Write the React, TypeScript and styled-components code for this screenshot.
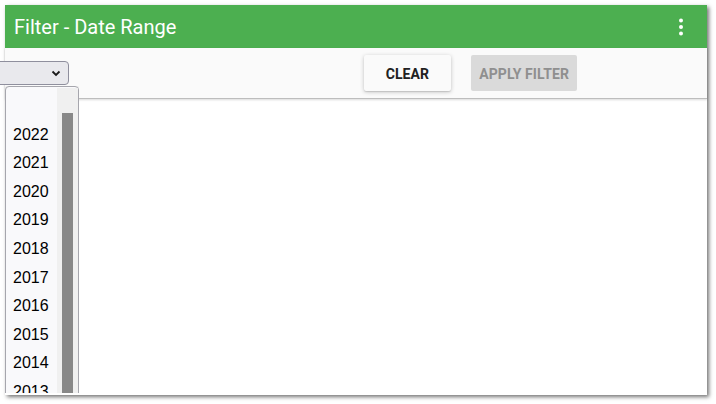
import React from "react";
import styled, { createGlobalStyle } from "styled-components";

const Global = createGlobalStyle`
  html, body { margin: 0; padding: 0; background: #ffffff; }
  body { font-family: Roboto, "Liberation Sans", Arial, sans-serif; }
  * { box-sizing: border-box; }
`;

const Page = styled.div`
  width: 716px;
  height: 404px;
  padding: 5px 9px 9px 5px;
  overflow: hidden;
`;

const Panel = styled.section`
  position: relative;
  width: 702px;
  height: 390px;
  background: #ffffff;
  box-shadow: 2px 2px 4px rgba(0, 0, 0, 0.55);
  display: flex;
  flex-direction: column;
`;

const Header = styled.header`
  height: 43px;
  background: #4caf50;
  display: flex;
  align-items: center;
  justify-content: space-between;
  padding: 0 22px 0 9px;
  flex-shrink: 0;
`;

const Title = styled.h1`
  margin: 0;
  font-family: Roboto, "Liberation Sans", sans-serif;
  font-size: 20px;
  font-weight: 400;
  color: #ffffff;
  letter-spacing: 0;
`;

const Kebab = styled.button`
  border: 0;
  background: transparent;
  padding: 0;
  width: 8px;
  height: 20px;
  margin-top: 1px;
  display: flex;
  align-items: center;
  justify-content: center;
  cursor: pointer;
`;

const Toolbar = styled.div`
  height: 51px;
  background: #fafafa;
  border-bottom: 1px solid #bdbdbd;
  box-shadow: 0 1px 2px rgba(0, 0, 0, 0.15);
  display: flex;
  align-items: flex-start;
  padding: 7px 130px 0 0;
  flex-shrink: 0;
  position: relative;
  z-index: 1;
`;

const Select = styled.div`
  margin-left: -10px;
  margin-top: 6px;
  width: 74px;
  height: 24px;
  background: #e9e9ed;
  border: 1px solid #8f8f9d;
  border-radius: 4px;
  display: flex;
  align-items: center;
  justify-content: flex-end;
  padding-right: 7px;
`;

const Actions = styled.div`
  margin-left: auto;
  display: flex;
  gap: 20px;
`;

const Button = styled.button<{ $disabled?: boolean }>`
  height: 36px;
  border: 0;
  border-radius: 2px;
  padding: 1px ${(p) => (p.$disabled ? "8px" : "22px")} 0;
  font-family: Roboto, "Liberation Sans", sans-serif;
  font-size: 14px;
  font-weight: 700;
  letter-spacing: 0.1px;
  background: ${(p) => (p.$disabled ? "#dadada" : "#fafafa")};
  color: ${(p) => (p.$disabled ? "#8f8f8f" : "#212121")};
  box-shadow: ${(p) =>
    p.$disabled ? "none" : "0 1px 4px rgba(0,0,0,0.22), 0 1px 1px rgba(0,0,0,0.1)"};
`;

const Body = styled.div`
  flex: 1;
  background: #ffffff;
`;

const ListClip = styled.div`
  position: absolute;
  left: 0;
  top: 81px;
  bottom: 2px;
  width: 74px;
  overflow: hidden;
  z-index: 2;
`;

const List = styled.div`
  position: relative;
  height: 340px;
  background: #f9f9fb;
  border: 1px solid #a6a6ad;
  border-radius: 4px;
  box-shadow: 0 1px 3px rgba(0, 0, 0, 0.25);
  padding-top: 5px;
`;

const Track = styled.div`
  position: absolute;
  top: 1px;
  right: 0;
  width: 21px;
  bottom: 0;
  background: #f0f0f0;
`;

const Thumb = styled.div`
  position: absolute;
  top: 25px;
  left: 5px;
  width: 11px;
  bottom: 0;
  background: #888888;
`;

const Option = styled.div`
  height: 28.6px;
  line-height: 28.6px;
  padding-left: 7px;
  font-family: "Liberation Sans", Arial, sans-serif;
  font-size: 16px;
  color: #000000;
`;

const years = ["", "2022", "2021", "2020", "2019", "2018", "2017", "2016", "2015", "2014", "2013", "2012"];

export default function App() {
  return (
    <>
      <Global />
      <Page>
        <Panel>
          <Header>
            <Title>Filter - Date Range</Title>
            <Kebab aria-label="More">
              <svg width="6" height="20" viewBox="0 0 6 20">
                <circle cx="3" cy="3.5" r="2" fill="#fff" />
                <circle cx="3" cy="10" r="2" fill="#fff" />
                <circle cx="3" cy="16.5" r="2" fill="#fff" />
              </svg>
            </Kebab>
          </Header>
          <Toolbar>
            <Select>
              <svg width="10" height="7" viewBox="0 0 10 7">
                <path d="M1.5 1.5 L5 5 L8.5 1.5" fill="none" stroke="#1a1a1a" strokeWidth="1.8" />
              </svg>
            </Select>
            <Actions>
              <Button>CLEAR</Button>
              <Button $disabled>APPLY FILTER</Button>
            </Actions>
          </Toolbar>
          <Body />
          <ListClip>
            <List>
              <Track>
                <Thumb />
              </Track>
              {years.map((y, i) => (
                <Option key={i}>{y || "\u00a0"}</Option>
              ))}
            </List>
          </ListClip>
        </Panel>
      </Page>
    </>
  );
}
